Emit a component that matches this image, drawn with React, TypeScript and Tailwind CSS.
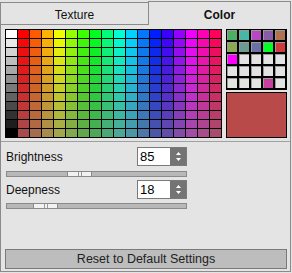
import React from 'react';

// gray column values, top (white) to bottom (black)
const GRAYS = [255, 232, 211, 190, 168, 145, 122, 98, 74, 50, 30, 0];
const HUES = 17;
const ROWS = 12;

const E = '#e3e3e3';
const CUSTOM = [
  '#4caf62', '#47b8a6', '#b946c2', '#8a5ba8', '#b1734f',
  '#8aab4f', '#6a9b92', '#6a6fa8', '#00ff22', '#d13a3a',
  '#ff00ff', E, E, E, E,
  E, E, E, E, E,
  E, E, E, '#c93fa0', E,
];

function hueRgb(h: number): [number, number, number] {
  const x = (1 - Math.abs(((h / 60) % 2) - 1)) * 255;
  if (h < 60) return [255, x, 0];
  if (h < 120) return [x, 255, 0];
  if (h < 180) return [0, 255, x];
  if (h < 240) return [0, x, 255];
  if (h < 300) return [x, 0, 255];
  return [255, 0, x];
}

function cellColor(row: number, col: number) {
  if (col === 0) {
    const g = GRAYS[row];
    return `rgb(${g},${g},${g})`;
  }
  const [r, g, b] = hueRgb(((col - 1) * 360) / HUES);
  // fade toward a muted gray going down
  const t = (row / (ROWS - 1)) * 0.64;
  const mix = (c: number) => Math.round(c * (1 - t) + 118 * t);
  return `rgb(${mix(r)},${mix(g)},${mix(b)})`;
}

const Palette = () => {
  const cells = [];
  for (let r = 0; r < ROWS; r++) {
    for (let c = 0; c < HUES + 1; c++) {
      cells.push(
        <div key={`${r}-${c}`} className="w-[11px] h-[8px]" style={{ background: cellColor(r, c) }} />
      );
    }
  }
  return (
    <div className="grid grid-cols-[repeat(18,11px)] gap-[1px] p-[1px] bg-black w-[217px] h-[109px]">
      {cells}
    </div>
  );
};

const CustomColors = () => (
  <div className="grid grid-cols-[repeat(5,10px)] gap-[2px] pl-[1px] pt-[1px] pr-[2px] pb-[2px] bg-black w-[61px]">
    {CUSTOM.map((c, i) => (
      <div
        key={i}
        className="w-[10px] h-[10px] border-t border-l border-t-[#9a9a9a] border-l-[#9a9a9a]"
        style={{ background: c }}
      />
    ))}
  </div>
);

const Spin = ({ value }: { value: number }) => (
  <div className="flex w-[50px] h-[19px] border border-[#7a7a7a] bg-white">
    <div className="flex-1 flex items-center pl-[2px] text-[13px] text-black">{value}</div>
    <div className="w-[16px] bg-[#747474] flex items-center justify-center">
      <svg width="7" height="11" viewBox="0 0 7 11">
        <path d="M3.5 1 L6 4 L1 4 Z" fill="#fff" />
        <path d="M1 7 L6 7 L3.5 10 Z" fill="#fff" />
      </svg>
    </div>
  </div>
);

const Slider = ({ offset }: { offset: number }) => (
  <div className="relative ml-[1px] w-[181px] h-[6px] border border-[#8a8a8a] bg-[#b8b8b8]">
    <div
      className="absolute top-[-1px] w-[25px] h-[6px] border border-[#8a8a8a] bg-[#f2f2f2] flex justify-center gap-[2px]"
      style={{ left: offset - 1 }}
    >
      <div className="w-px h-full bg-[#9a9a9a]" />
      <div className="w-px h-full bg-[#9a9a9a]" />
    </div>
  </div>
);

export default function App() {
  return (
    <div className="w-[292px] h-[273px] bg-[#e4e4e4] flex flex-col font-['Liberation_Sans',Arial,sans-serif] text-[#111] text-[12px]">
      {/* tabs */}
      <div className="flex h-[25px] shrink-0">
        <div className="mt-[2px] w-[148px] border-t border-l border-b border-[#8a8a8a] flex items-center justify-center pt-[2px]">
          Texture
        </div>
        <div className="flex-1 mt-[1px] mr-[1px] border-t border-l border-r border-[#8a8a8a] flex items-center justify-center pt-[3px] font-bold">
          Color
        </div>
      </div>

      {/* panel */}
      <div className="flex-1 mr-[1px] mb-[1px] border-l border-r border-b border-[#8a8a8a] pl-[4px] pt-[4px] pb-[2px] flex flex-col">
        <div className="flex gap-[4px]">
          <Palette />
          <div className="flex flex-col gap-[2px]">
            <CustomColors />
            <div className="w-[61px] h-[46px] border border-black bg-[#b84a4a]" />
          </div>
        </div>

        <div className="-ml-[4px] mt-[3px] h-px bg-[#a0a0a0]" />

        <div className="flex items-center mt-[5px]">
          <span className="w-[132px] pl-[1px]">Brightness</span>
          <Spin value={85} />
        </div>
        <div className="mt-[5px]">
          <Slider offset={61} />
        </div>

        <div className="flex items-center mt-[3px]">
          <span className="w-[132px] pl-[1px]">Deepness</span>
          <Spin value={18} />
        </div>
        <div className="mt-[4px]">
          <Slider offset={27} />
        </div>

        <button className="mt-auto w-[282px] h-[20px] border border-[#7a7a7a] bg-[#bdbdbd] text-[12.5px] text-[#222] flex items-center justify-center">
          Reset to Default Settings
        </button>
      </div>
    </div>
  );
}
